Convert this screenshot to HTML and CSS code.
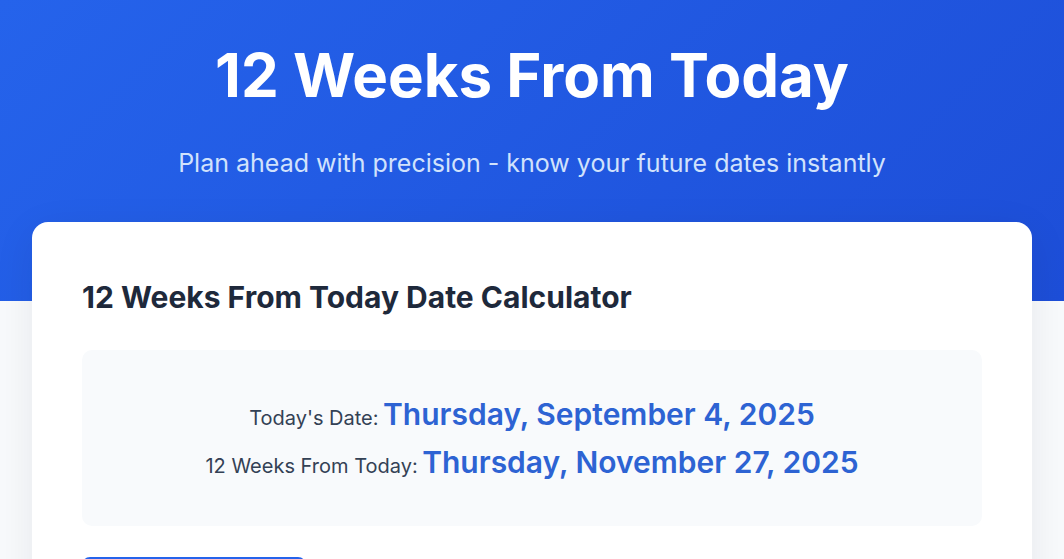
FILE: index.html
```html
<!DOCTYPE html>
<html lang="en">
<head>
<meta charset="utf-8">
<title>12 Weeks From Today</title>
<link rel="stylesheet" href="styles.css">
</head>
<body>
<header class="hero">
  <h1 class="hero-title">12 Weeks From Today</h1>
  <p class="hero-sub">Plan ahead with precision - know your future dates instantly</p>
</header>
<main class="card">
  <h2 class="card-title">12 Weeks From Today Date Calculator</h2>
  <div class="result">
    <div class="row"><span class="label">Today's Date:</span> <span class="date">Thursday, September 4, 2025</span></div>
    <div class="row"><span class="label">12 Weeks From Today:</span> <span class="date">Thursday, November 27, 2025</span></div>
  </div>
  <button class="btn" type="button">Calculate Custom Date</button>
</main>
</body>
</html>
```
FILE: styles.css
```css
* { box-sizing: border-box; }
html, body { margin: 0; padding: 0; }
body {
  font-family: Inter, "Noto Sans", sans-serif;
  background: #f8fafc;
  color: #1e293b;
}
.hero {
  background: linear-gradient(135deg, #2563eb 0%, #1d4ed8 100%);
  color: #fff;
  text-align: center;
  padding: 39px 20px 120px;
}
.hero-title {
  margin: 0;
  font-size: 60px;
  line-height: 72px;
  font-weight: 700;
}
.hero-sub {
  margin: 35px 0 0;
  font-size: 25px;
  line-height: 35px;
  color: #dbeafe;
  opacity: 0.95;
}
.card {
  display: block;
  width: 1000px;
  margin: -79px auto 0;
  background: #fff;
  border-radius: 16px;
  padding: 56px 50px 50px;
  box-shadow: 0 10px 40px rgba(15, 23, 42, 0.08);
}
.card-title {
  margin: 0 0 34px;
  font-size: 30px;
  line-height: 38px;
  font-weight: 700;
  color: #1e293b;
}
.result {
  background: #f8fafc;
  border-radius: 10px;
  padding: 45px 20px 35px;
  text-align: center;
}
.row {
  height: 48px;
  line-height: 48px;
}
.label {
  font-size: 20px;
  line-height: 1;
  color: #334155;
}
.date {
  font-size: 30px;
  line-height: 1;
  font-weight: 600;
  color: #2d63d3;
}
.btn {
  margin-top: 31px;
  background: #2563eb;
  color: #fff;
  border: 0;
  border-radius: 8px;
  padding: 15px 24px;
  font-family: inherit;
  font-size: 16px;
  font-weight: 600;
}
```
